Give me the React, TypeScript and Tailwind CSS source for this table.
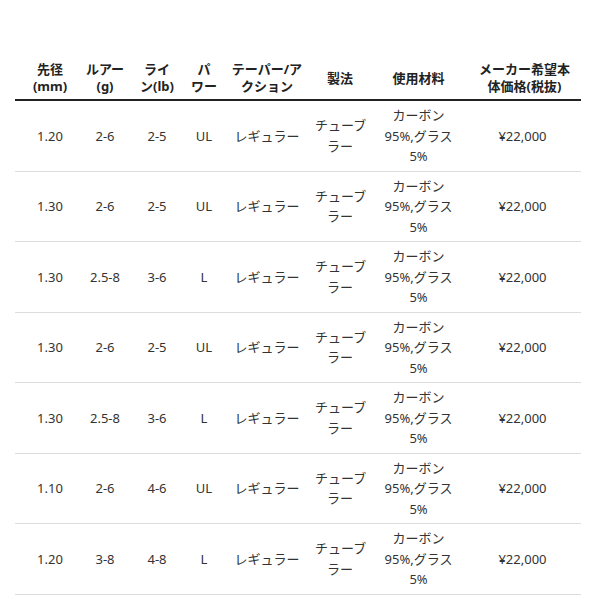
const headers: string[][] = [
  ["先径", "(mm)"],
  ["ルアー", "(g)"],
  ["ライ", "ン(lb)"],
  ["パ", "ワー"],
  ["テーパー/ア", "クション"],
  ["製法"],
  ["使用材料"],
  ["メーカー希望本", "体価格(税抜)"],
];

const widths = [
  "w-[70px]",
  "w-[40px]",
  "w-[64px]",
  "w-[30px]",
  "w-[96px]",
  "w-[50px]",
  "w-[107px]",
  "w-[109px]",
];

const rows = [
  ["1.20", "2-6", "2-5", "UL"],
  ["1.30", "2-6", "2-5", "UL"],
  ["1.30", "2.5-8", "3-6", "L"],
  ["1.30", "2-6", "2-5", "UL"],
  ["1.30", "2.5-8", "3-6", "L"],
  ["1.10", "2-6", "4-6", "UL"],
  ["1.20", "3-8", "4-8", "L"],
];

export default function App() {
  return (
    <div className="w-[600px] h-[600px] overflow-hidden bg-white pt-[57px] pl-[15px] font-['Noto_Sans','Noto_Sans_CJK_JP',sans-serif] text-[13px] text-[#333]">
      <table className="w-[566px] table-fixed border-collapse text-center">
        <thead>
          <tr className="border-b-2 border-[#222]">
            {headers.map((h, i) => (
              <th
                key={i}
                className={`${widths[i]} ${i === 7 ? "pl-0 pr-1" : "px-0"} pt-[4px] pb-[4px] font-bold leading-[17px] text-[#222] whitespace-nowrap`}
              >
                {h.map((line, j) => (
                  <div key={j}>{line}</div>
                ))}
              </th>
            ))}
          </tr>
        </thead>
        <tbody>
          {rows.map((r, i) => (
            <tr key={i} className="border-b border-[#ddd]">
              {r.map((c, j) => (
                <td key={j} className="py-1 leading-[20.5px]">{c}</td>
              ))}
              <td className="py-1 leading-[20.5px]">レギュラー</td>
              <td className="py-1 leading-[20.5px] whitespace-nowrap">
                <div>チューブ</div>
                <div>ラー</div>
              </td>
              <td className="py-1 leading-[20.5px]">
                <div>カーボン</div>
                <div>95%,グラス</div>
                <div>5%</div>
              </td>
              <td className="py-1 pr-2 leading-[20.5px]">¥22,000</td>
            </tr>
          ))}
        </tbody>
      </table>
    </div>
  );
}
